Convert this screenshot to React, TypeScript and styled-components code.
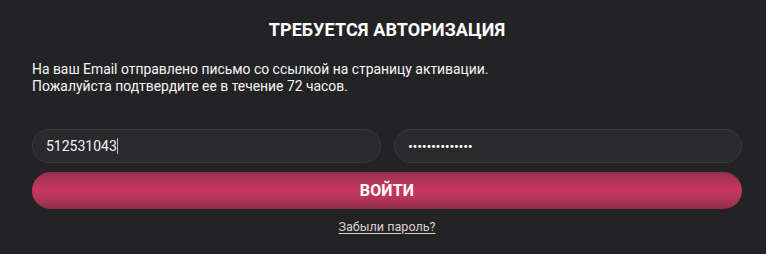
import React from "react";
import styled, { createGlobalStyle } from "styled-components";

const Global = createGlobalStyle`
  html, body {
    margin: 0;
    padding: 0;
    background: #232325;
  }
  body {
    font-family: Roboto, "Noto Sans", "Liberation Sans", sans-serif;
    color: #ffffff;
  }
`;

const Page = styled.div`
  width: 766px;
  height: 254px;
  box-sizing: border-box;
  padding: 19px 24px 0 32px;
  background: #232325;
  display: flex;
  flex-direction: column;
  overflow: hidden;
`;

const Title = styled.h1`
  margin: 0;
  font-size: 18px;
  line-height: 22px;
  font-weight: 700;
  text-align: center;
  color: #ffffff;
  letter-spacing: 0.1px;
`;

const Message = styled.p`
  margin: 20px 0 0 0;
  font-size: 13.9px;
  line-height: 17px;
  color: #f6f6f6;
`;

const Fields = styled.div`
  margin-top: 34px;
  display: grid;
  grid-template-columns: 1fr 1fr;
  gap: 13px;
`;

const Field = styled.div`
  height: 34px;
  box-sizing: border-box;
  border: 1px solid #3a3a3d;
  border-radius: 17px;
  background: #2a2a2c;
  display: flex;
  align-items: center;
  padding: 0 13px;
  font-size: 14px;
  color: #f2f2f2;
`;

const Caret = styled.span`
  display: inline-block;
  width: 1px;
  height: 16px;
  background: #bdbdbd;
`;

const Dots = styled.span`
  font-size: 10px;
  letter-spacing: -1.3px;
  color: #ffffff;
  font-family: "DejaVu Sans", sans-serif;
`;

const Submit = styled.button`
  margin-top: 9px;
  height: 37px;
  width: 100%;
  border: none;
  border-radius: 19px;
  background: linear-gradient(
    180deg,
    #94304e 0%,
    #b2345a 25%,
    #c8365f 50%,
    #b2345a 75%,
    #8c2c4a 100%
  );
  color: #ffffff;
  font-family: Roboto, "Noto Sans", sans-serif;
  font-size: 16px;
  font-weight: 700;
  letter-spacing: 0.2px;
  cursor: pointer;
`;

const Forgot = styled.a`
  margin-top: 10px;
  align-self: center;
  font-size: 12.6px;
  line-height: 15px;
  color: #d9d2ce;
  text-decoration: underline;
  text-underline-offset: 2px;
  cursor: pointer;
`;

export default function App() {
  return (
    <>
      <Global />
      <Page>
        <Title>ТРЕБУЕТСЯ АВТОРИЗАЦИЯ</Title>
        <Message>
          На ваш Email отправлено письмо со ссылкой на страницу активации.
          <br />
          Пожалуйста подтвердите ее в течение 72 часов.
        </Message>
        <Fields>
          <Field>
            512531043
            <Caret />
          </Field>
          <Field>
            <Dots>••••••••••••••</Dots>
          </Field>
        </Fields>
        <Submit>ВОЙТИ</Submit>
        <Forgot>Забыли пароль?</Forgot>
      </Page>
    </>
  );
}
